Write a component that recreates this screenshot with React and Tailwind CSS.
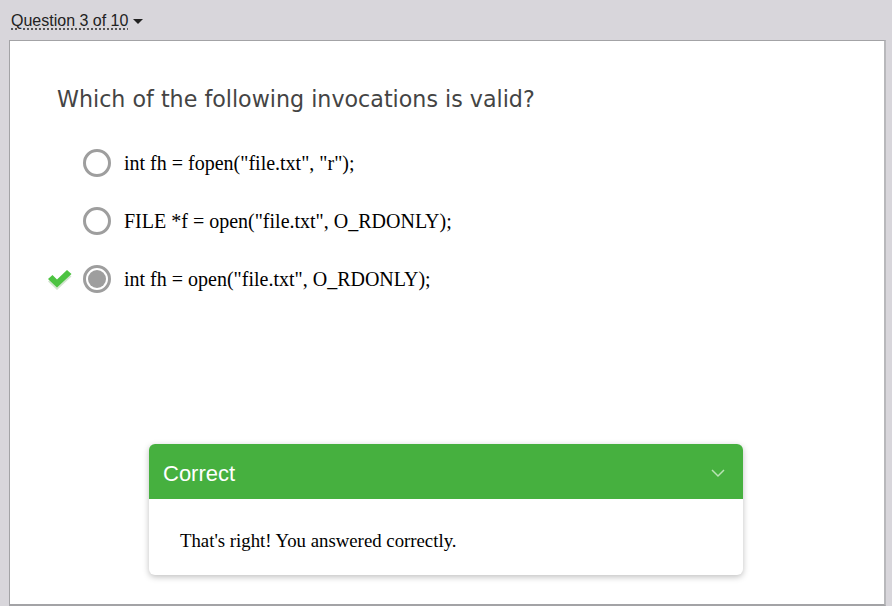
import React from "react";

const options = [
  { text: 'int fh = fopen("file.txt", "r");', selected: false },
  { text: 'FILE *f = open("file.txt", O_RDONLY);', selected: false },
  { text: 'int fh = open("file.txt", O_RDONLY);', selected: true, correct: true },
];

function Radio({ selected }) {
  return (
    <div className="w-[28px] h-[28px] rounded-full border-[3px] border-[#9e9e9e] bg-white flex items-center justify-center shrink-0">
      {selected && <div className="w-[18px] h-[18px] rounded-full bg-[#9e9e9e]" />}
    </div>
  );
}

function Check() {
  return (
    <svg width="26" height="22" viewBox="0 0 26 22">
      <path d="M1 11 L5.5 7 L10 11.5 L20 2 L24.5 6 L10 19.5 Z" fill="#d3e5cf" transform="translate(0,2.5)" />
      <path d="M1 11 L5.5 7 L10 11.5 L20 2 L24.5 6 L10 19.5 Z" fill="#4cc341" />
    </svg>
  );
}

export default function App() {
  return (
    <div className="w-[892px] h-[606px] bg-[#d8d6db] flex flex-col font-['Liberation_Sans',Arial,sans-serif] overflow-hidden">
      {/* header */}
      <div className="h-[40px] pl-[11px] pt-[11px] flex items-start">
        <span className="text-[16px] text-[#222] leading-[20px] underline decoration-dotted decoration-[#333] underline-offset-[3px]">
          Question 3 of 10
        </span>
        <span className="ml-[5px] mt-[8px] w-0 h-0 border-l-[5px] border-r-[5px] border-t-[5px] border-l-transparent border-r-transparent border-t-[#222]" />
      </div>

      {/* panel */}
      <div className="ml-[9px] w-[877px] flex-1 bg-white border border-[#a3a3a6] border-r-[2px] border-b-[2px] border-r-[#b8b8bb] flex flex-col">
        <h1 className="mt-[43px] ml-[47px] text-[22.2px] text-[#444] font-['DejaVu_Sans',Verdana,sans-serif] leading-[30px]">
          Which of the following invocations is valid?
        </h1>

        <div className="mt-[35px] flex flex-col gap-[30px]">
          {options.map((o, i) => (
            <div key={i} className="flex items-center h-[28px]">
              <div className="w-[73px] flex justify-end pr-[10px]">{o.correct && <Check />}</div>
              <Radio selected={o.selected} />
              <span className="ml-[13px] text-[20px] text-black font-['Liberation_Serif','Times_New_Roman',serif]">
                {o.text}
              </span>
            </div>
          ))}
        </div>

        {/* feedback */}
        <div className="mt-[151px] ml-[139px] w-[594px] rounded-[6px] bg-white shadow-[0_2px_6px_rgba(0,0,0,0.25)] overflow-hidden">
          <div className="h-[55px] bg-[#46b03f] flex items-center justify-between pl-[14px] pr-[18px] pt-[3px]">
            <span className="text-white text-[22px]">Correct</span>
            <svg width="14" height="9" viewBox="0 0 14 9">
              <path d="M1 1 L7 7 L13 1" stroke="#b9e3b5" strokeWidth="1.5" fill="none" />
            </svg>
          </div>
          <div className="h-[76px] flex items-center pl-[31px] pt-[9px]">
            <span className="text-[18.8px] text-black font-['Liberation_Serif','Times_New_Roman',serif]">
              That's right! You answered correctly.
            </span>
          </div>
        </div>
      </div>
    </div>
  );
}
